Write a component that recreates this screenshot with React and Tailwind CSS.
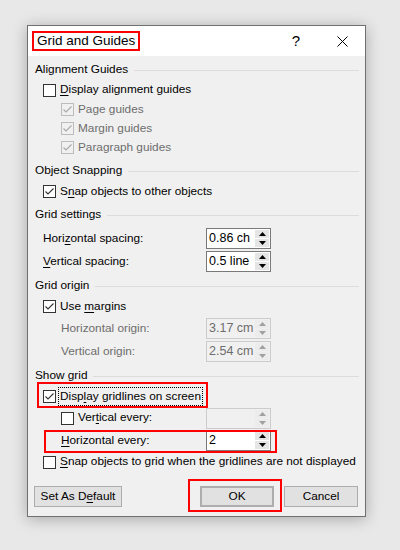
import React from 'react'

const U = ({ children }) => <span className="underline decoration-1 underline-offset-[2px]">{children}</span>

const Box = ({ checked, disabled }) => (
  <span className={`flex h-[13px] w-[13px] shrink-0 items-center justify-center border ${disabled ? 'border-[#bcbcbc] bg-[#f0f0f0]' : 'border-[#333333] bg-white'}`}>
    {checked && (
      <svg width="11" height="11" viewBox="0 0 11 11">
        <path d="M1.5 5.5 L4 8 L9.5 2.5" fill="none" stroke={disabled ? '#a8a8a8' : '#333333'} strokeWidth="1.1" />
      </svg>
    )}
  </span>
)

const Arrow = ({ up, disabled }) => (
  <div className={`flex flex-1 items-center justify-center ${disabled ? 'bg-[#ececec]' : 'bg-[#e5e5e5]'}`}>
    <svg width="7" height="4" viewBox="0 0 7 4">
      <path d={up ? 'M0 4 L3.5 0 L7 4 Z' : 'M0 0 L3.5 4 L7 0 Z'} fill={disabled ? '#a0a0a0' : '#000'} />
    </svg>
  </div>
)

const Spin = ({ value, disabled }) => (
  <div className={`flex h-[21px] w-[65px] shrink-0 border ${disabled ? 'border-[#cccccc] bg-[#f0f0f0] text-[#6d6d6d]' : 'border-[#7a7a7a] bg-white text-black'}`}>
    <div className="flex flex-1 items-center overflow-hidden whitespace-nowrap pl-[2px] text-[12.5px]">{value}</div>
    <div className="flex w-[16px] flex-col gap-px p-px">
      <Arrow up disabled={disabled} />
      <Arrow disabled={disabled} />
    </div>
  </div>
)

const Header = ({ children, className = '' }) => (
  <div className={`flex h-[20px] items-center whitespace-nowrap ${className}`}>
    <span className="text-[#000]">{children}</span>
    <div className="ml-[6px] h-px flex-1 bg-[#dcdcdc]" />
  </div>
)

const Check = ({ checked, disabled, sub, h = 'h-[20px]', children }) => (
  <div className={`flex items-center whitespace-nowrap ${h} ${sub ? 'pl-[26px]' : 'pl-[8px]'} ${disabled ? 'text-[#6d6d6d]' : 'text-black'}`}>
    <Box checked={checked} disabled={disabled} />
    <span className="ml-[4px]">{children}</span>
  </div>
)

const Field = ({ label, value, disabled, sub, h = 'h-[23px]' }) => (
  <div className={`flex items-center whitespace-nowrap ${h} ${sub ? 'pl-[26px]' : 'pl-[8px]'}`}>
    <div className={`${sub ? 'w-[145px]' : 'w-[163px]'} ${disabled ? 'text-[#6d6d6d]' : 'text-black'}`}>{label}</div>
    <Spin value={value} disabled={disabled} />
  </div>
)

const Btn = ({ children, className = '' }) => (
  <button className={`flex h-[21px] items-center justify-center whitespace-nowrap border border-[#adadad] bg-[#e1e1e1] text-black ${className}`}>{children}</button>
)

export default function App() {
  return (
    <div className="h-[550px] w-[400px] bg-[#e8e8e8] pl-[27px] pt-[25px]" style={{ fontFamily: '"Liberation Sans", Arial, sans-serif' }}>
      <div className="w-[339px] border border-[#707070] bg-[#f0f0f0] text-[11.8px] shadow-[0_2px_14px_rgba(0,0,0,0.28)]">
        {/* title bar */}
        <div className="flex h-[30px] items-center bg-white pl-[4px]">
          <span className="flex h-[20px] items-center whitespace-nowrap border-2 border-[#ff0000] px-[3px] text-[13.5px] leading-none text-black">Grid and Guides</span>
          <div className="flex-1" />
          <div className="flex w-[46px] justify-center text-[15px] text-black">?</div>
          <div className="flex w-[46px] justify-center">
            <svg width="11" height="11" viewBox="0 0 11 11">
              <path d="M0.5 0.5 L10.5 10.5 M10.5 0.5 L0.5 10.5" stroke="#000" strokeWidth="1" />
            </svg>
          </div>
        </div>

        {/* body */}
        <div className="flex flex-col pl-[7px] pr-[6px] pb-[9px] pt-[4px]">
          <Header>Alignment Guides</Header>
          <Check><U>D</U>isplay alignment guides</Check>
          <Check sub checked disabled h="h-[19px]">Page guides</Check>
          <Check sub checked disabled h="h-[19px]">Margin guides</Check>
          <Check sub checked disabled h="h-[19px]">Paragraph guides</Check>

          <Header className="mt-[4px]">Object Snapping</Header>
          <Check checked h="h-[21px]">S<U>n</U>ap objects to other objects</Check>

          <Header className="mt-[3px]">Grid settings</Header>
          <div className="mt-[2px]">
            <Field label={<>Hori<U>z</U>ontal spacing:</>} value="0.86 ch" />
            <Field label={<><U>V</U>ertical spacing:</>} value="0.5 line" />
          </div>

          <Header className="mt-[3px]">Grid origin</Header>
          <Check checked h="h-[21px]">Use <U>m</U>argins</Check>
          <Field sub disabled label="Horizontal origin:" value="3.17 cm" />
          <Field sub disabled label="Vertical origin:" value="2.54 cm" />

          <Header className="mt-[3px]">Show grid</Header>
          <div className="relative flex h-[21px] items-center whitespace-nowrap pl-[8px]">
            <Box checked />
            <span className="ml-[2px] flex h-[19px] items-center border border-dotted border-black px-px">Disp<U>l</U>ay gridlines on screen</span>
            <div className="pointer-events-none absolute left-[2px] top-[-4px] h-[26px] w-[171px] border-2 border-[#ff0000]" />
          </div>
          <div className="flex h-[22px] items-center whitespace-nowrap pl-[26px]">
            <Box />
            <span className="ml-[4px] w-[128px]">Ver<U>t</U>ical every:</span>
            <Spin value="" disabled />
          </div>
          <div className="relative flex h-[23px] items-center whitespace-nowrap pl-[26px]">
            <span className="w-[145px]"><U>H</U>orizontal every:</span>
            <Spin value="2" />
            <div className="pointer-events-none absolute left-[9px] top-[1px] h-[23px] w-[233px] border-2 border-[#ff0000]" />
          </div>
          <Check><U>S</U>nap objects to grid when the gridlines are not displayed</Check>

          <div className="mt-[14px] flex items-center">
            <Btn className="-ml-px w-[88px]">Set As D<U>e</U>fault</Btn>
            <div className="flex-1" />
            <div className="relative">
              <Btn className="w-[74px] border-2 border-[#0078d7]">OK</Btn>
              <div className="pointer-events-none absolute left-[-12px] top-[-7px] h-[33px] w-[94px] border-2 border-[#ff0000]" />
            </div>
            <Btn className="ml-[10px] mr-px w-[74px]">Cancel</Btn>
          </div>
        </div>
      </div>
    </div>
  )
}
